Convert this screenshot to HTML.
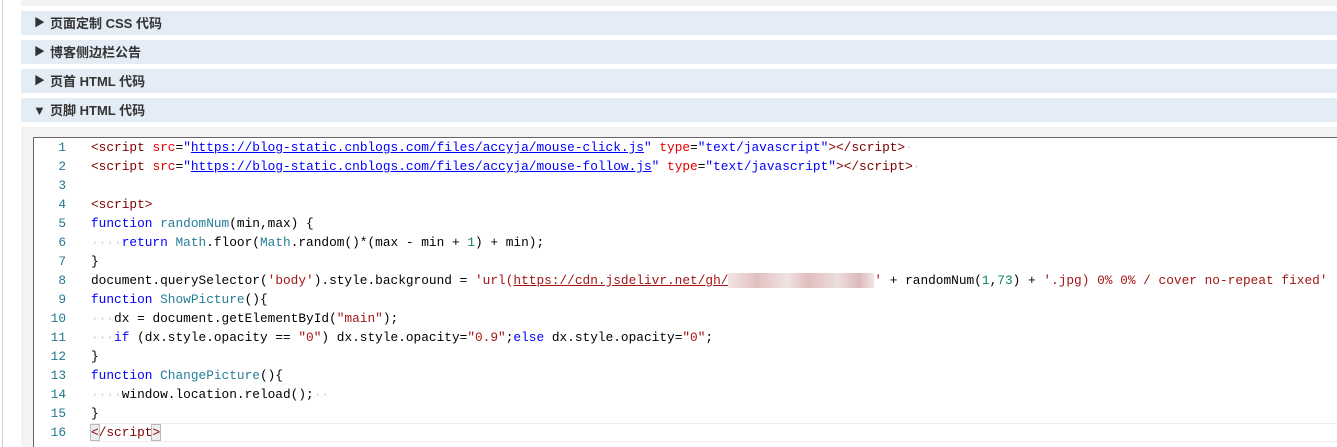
<!DOCTYPE html>
<html><head><meta charset="utf-8"><style>
html,body{margin:0;width:1337px;height:447px;overflow:hidden}
body{background:#fff;position:relative;font-family:"Liberation Sans","Noto Sans CJK SC",sans-serif}
.vl{position:absolute;left:2px;top:0;width:1px;height:447px;background:#c5d2e4}
.top{position:absolute;left:21px;top:0;right:0;height:6px;background:#f3f3f3}
.h{position:absolute;left:21px;right:0;height:24px;background:#e4ecf6;font-size:13px;font-weight:bold;color:#333;line-height:25px}
.h .t{position:absolute;left:13px;font-size:11px}
.h .t2{position:absolute;left:12px;font-size:13px}
.h .x{position:absolute;left:29px}
.content{position:absolute;left:21px;top:127px;right:0;height:320px;background:#f3f3f3;overflow:hidden}
.ed{position:absolute;left:12px;top:10px;right:-5px;height:330px;background:#fff;border:1px solid #666;border-right:none}
.code{position:absolute;left:0;top:0;font-family:"Liberation Mono",monospace;font-size:12.8px;line-height:19px}
.ln{position:absolute;width:32px;text-align:right;color:#237893}
.c{position:absolute;left:57px;white-space:pre;color:#000}
.tg{color:#800000}.at{color:#e50000}.s{color:#0000ff}.u{color:#0000ff;text-decoration:underline}
.kw{color:#0000ff}.fn{color:#267f99}.st{color:#a31515}.n{color:#098658}.su{color:#a31515;text-decoration:underline}
.d{color:#ccc}
.blur{background:linear-gradient(90deg,#f3e4e4,#e3c0c0 20%,#f0e3e3 40%,#e2bebe 55%,#ecdede 75%,#ddb9b9 90%,#f3e6e6);}
.cur{position:absolute;left:57px;width:1300px;top:285px;height:19px;border-top:1px solid #eee;border-bottom:1px solid #eee;box-sizing:border-box}
.br{outline:1px solid #b9b9b9;background:#eee}
</style></head><body>
<div class="vl"></div>
<div class="top"></div>
<div class="h" style="top:11px"><span class="t">▶</span><span class="x">页面定制 CSS 代码</span></div>
<div class="h" style="top:40px"><span class="t">▶</span><span class="x">博客侧边栏公告</span></div>
<div class="h" style="top:69px"><span class="t">▶</span><span class="x">页首 HTML 代码</span></div>
<div class="h" style="top:98px"><span class="t2">▼</span><span class="x">页脚 HTML 代码</span></div>
<div class="content"><div class="ed"><div class="code">
<div class="cur"></div>
<div class="ln" style="top:0">1</div><div class="c" style="top:0"><span class="tg">&lt;script</span> <span class="at">src</span>=<span class="s">"</span><span class="u">https://blog-static.cnblogs.com/files/accyja/mouse-click.js</span><span class="s">"</span> <span class="at">type</span>=<span class="s">"text/javascript"</span><span class="tg">&gt;&lt;/script&gt;</span><span class="d">·</span></div>
<div class="ln" style="top:19px">2</div><div class="c" style="top:19px"><span class="tg">&lt;script</span> <span class="at">src</span>=<span class="s">"</span><span class="u">https://blog-static.cnblogs.com/files/accyja/mouse-follow.js</span><span class="s">"</span> <span class="at">type</span>=<span class="s">"text/javascript"</span><span class="tg">&gt;&lt;/script&gt;</span><span class="d">·</span></div>
<div class="ln" style="top:38px">3</div>
<div class="ln" style="top:57px">4</div><div class="c" style="top:57px"><span class="tg">&lt;script&gt;</span></div>
<div class="ln" style="top:76px">5</div><div class="c" style="top:76px"><span class="kw">function</span> <span class="fn">randomNum</span>(min,max) {</div>
<div class="ln" style="top:95px">6</div><div class="c" style="top:95px"><span class="d">····</span><span class="kw">return</span> <span class="fn">Math</span>.floor(<span class="fn">Math</span>.random()*(max - min + <span class="n">1</span>) + min);</div>
<div class="ln" style="top:114px">7</div><div class="c" style="top:114px">}</div>
<div class="ln" style="top:133px">8</div><div class="c" style="top:133px">document.querySelector(<span class="st">'body'</span>).style.background = <span class="st">'url(</span><span class="su">https://cdn.jsdelivr.net/gh/</span><span class="blur">                   </span><span class="st">'</span> + randomNum(<span class="n">1</span>,<span class="n">73</span>) + <span class="st">'.jpg) 0% 0% / cover no-repeat fixed'</span></div>
<div class="ln" style="top:152px">9</div><div class="c" style="top:152px"><span class="kw">function</span> <span class="fn">ShowPicture</span>(){</div>
<div class="ln" style="top:171px">10</div><div class="c" style="top:171px"><span class="d">···</span>dx = document.getElementById(<span class="st">"main"</span>);</div>
<div class="ln" style="top:190px">11</div><div class="c" style="top:190px"><span class="d">···</span><span class="kw">if</span> (dx.style.opacity == <span class="st">"0"</span>) dx.style.opacity=<span class="st">"0.9"</span>;<span class="kw">else</span> dx.style.opacity=<span class="st">"0"</span>;</div>
<div class="ln" style="top:209px">12</div><div class="c" style="top:209px">}</div>
<div class="ln" style="top:228px">13</div><div class="c" style="top:228px"><span class="kw">function</span> <span class="fn">ChangePicture</span>(){</div>
<div class="ln" style="top:247px">14</div><div class="c" style="top:247px"><span class="d">····</span>window.location.reload();<span class="d">··</span></div>
<div class="ln" style="top:266px">15</div><div class="c" style="top:266px">}</div>
<div class="ln" style="top:285px">16</div><div class="c" style="top:285px"><span class="tg"><span class="br">&lt;</span>/script<span class="br">&gt;</span></span></div>
</div></div></div>
</body></html>
